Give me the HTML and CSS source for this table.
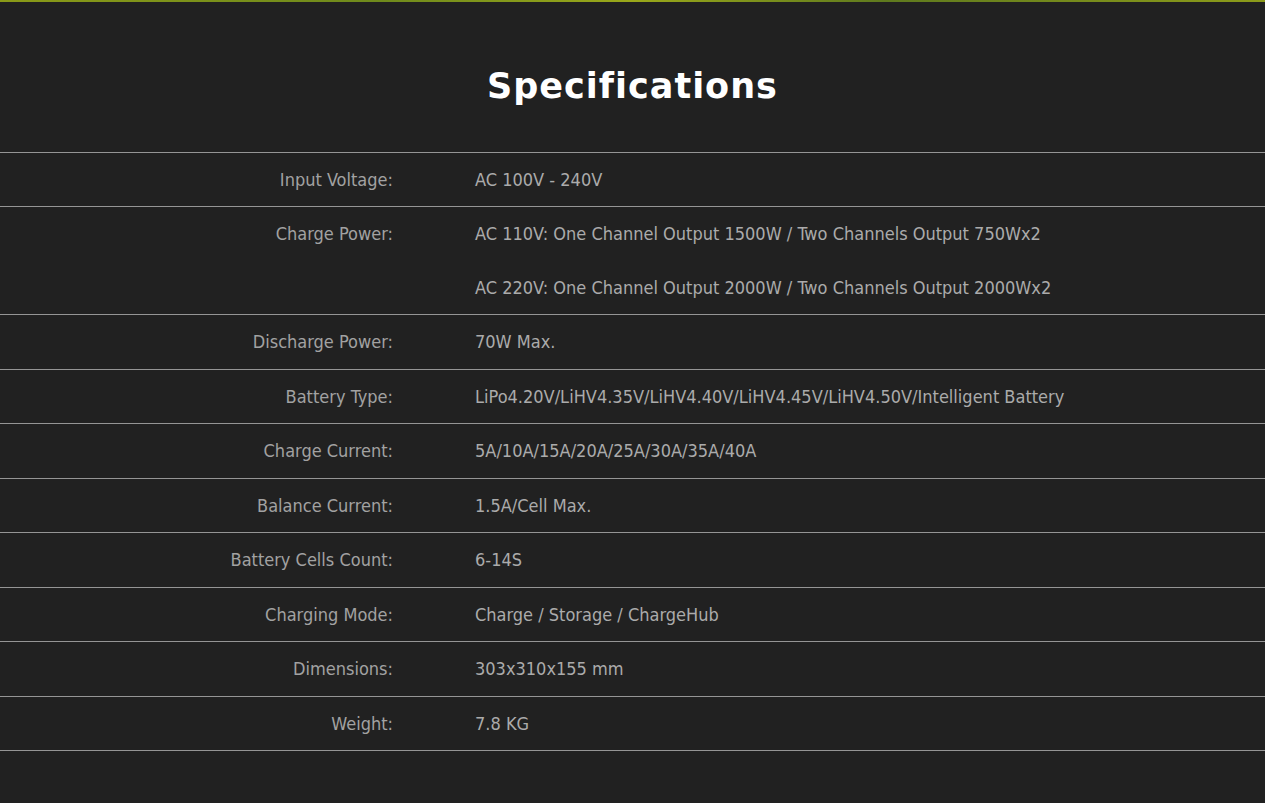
FILE: index.html
```html
<!DOCTYPE html>
<html lang="en">
<head>
<meta charset="utf-8">
<title>Specifications</title>
<link rel="stylesheet" href="styles.css">
</head>
<body>
<div class="topbar"></div>
<section class="specs">
  <h2 class="specs-title">Specifications</h2>
  <div class="spec-table">
    <div class="spec-row"><div class="spec-label">Input Voltage:</div><div class="spec-values"><div class="spec-value">AC 100V - 240V</div></div></div>
    <div class="spec-row"><div class="spec-label">Charge Power:</div><div class="spec-values"><div class="spec-value">AC 110V: One Channel Output 1500W / Two Channels Output 750Wx2</div><div class="spec-value">AC 220V: One Channel Output 2000W / Two Channels Output 2000Wx2</div></div></div>
    <div class="spec-row"><div class="spec-label">Discharge Power:</div><div class="spec-values"><div class="spec-value">70W Max.</div></div></div>
    <div class="spec-row"><div class="spec-label">Battery Type:</div><div class="spec-values"><div class="spec-value">LiPo4.20V/LiHV4.35V/LiHV4.40V/LiHV4.45V/LiHV4.50V/Intelligent Battery</div></div></div>
    <div class="spec-row"><div class="spec-label">Charge Current:</div><div class="spec-values"><div class="spec-value">5A/10A/15A/20A/25A/30A/35A/40A</div></div></div>
    <div class="spec-row"><div class="spec-label">Balance Current:</div><div class="spec-values"><div class="spec-value">1.5A/Cell Max.</div></div></div>
    <div class="spec-row"><div class="spec-label">Battery Cells Count:</div><div class="spec-values"><div class="spec-value">6-14S</div></div></div>
    <div class="spec-row"><div class="spec-label">Charging Mode:</div><div class="spec-values"><div class="spec-value">Charge / Storage / ChargeHub</div></div></div>
    <div class="spec-row"><div class="spec-label">Dimensions:</div><div class="spec-values"><div class="spec-value">303x310x155 mm</div></div></div>
    <div class="spec-row"><div class="spec-label">Weight:</div><div class="spec-values"><div class="spec-value">7.8 KG</div></div></div>
  </div>
</section>
</body>
</html>
```
FILE: styles.css
```css
html, body {
  margin: 0;
  padding: 0;
  background: #212121;
  height: 100%;
}
body {
  font-family: "DejaVu Sans Condensed", "DejaVu Sans", sans-serif;
  font-stretch: condensed;
}
.topbar {
  height: 2px;
  background: linear-gradient(90deg, #8a9a18, #6f8a1c 30%, #9aa81a 50%, #5f7a1e 70%, #8d9c1a);
}
.specs-title {
  margin: 0;
  box-sizing: border-box;
  height: 149.6px;
  padding-top: 18px;
  display: flex;
  align-items: center;
  justify-content: center;
  font-family: "DejaVu Sans", sans-serif;
  font-stretch: normal;
  font-weight: 700;
  font-size: 35px;
  color: #ffffff;
  letter-spacing: 1px;
}
.spec-table {
  border-bottom: 1px solid #959595;
}
.spec-row {
  display: grid;
  grid-template-columns: 393px 1fr;
  column-gap: 82px;
  border-top: 1px solid #959595;
}
.spec-label {
  text-align: right;
  line-height: 53.5px;
  font-size: 18px;
  color: #a2a2a2;
}
.spec-value {
  line-height: 53.5px;
  font-size: 18px;
  color: #ababab;
}
```
